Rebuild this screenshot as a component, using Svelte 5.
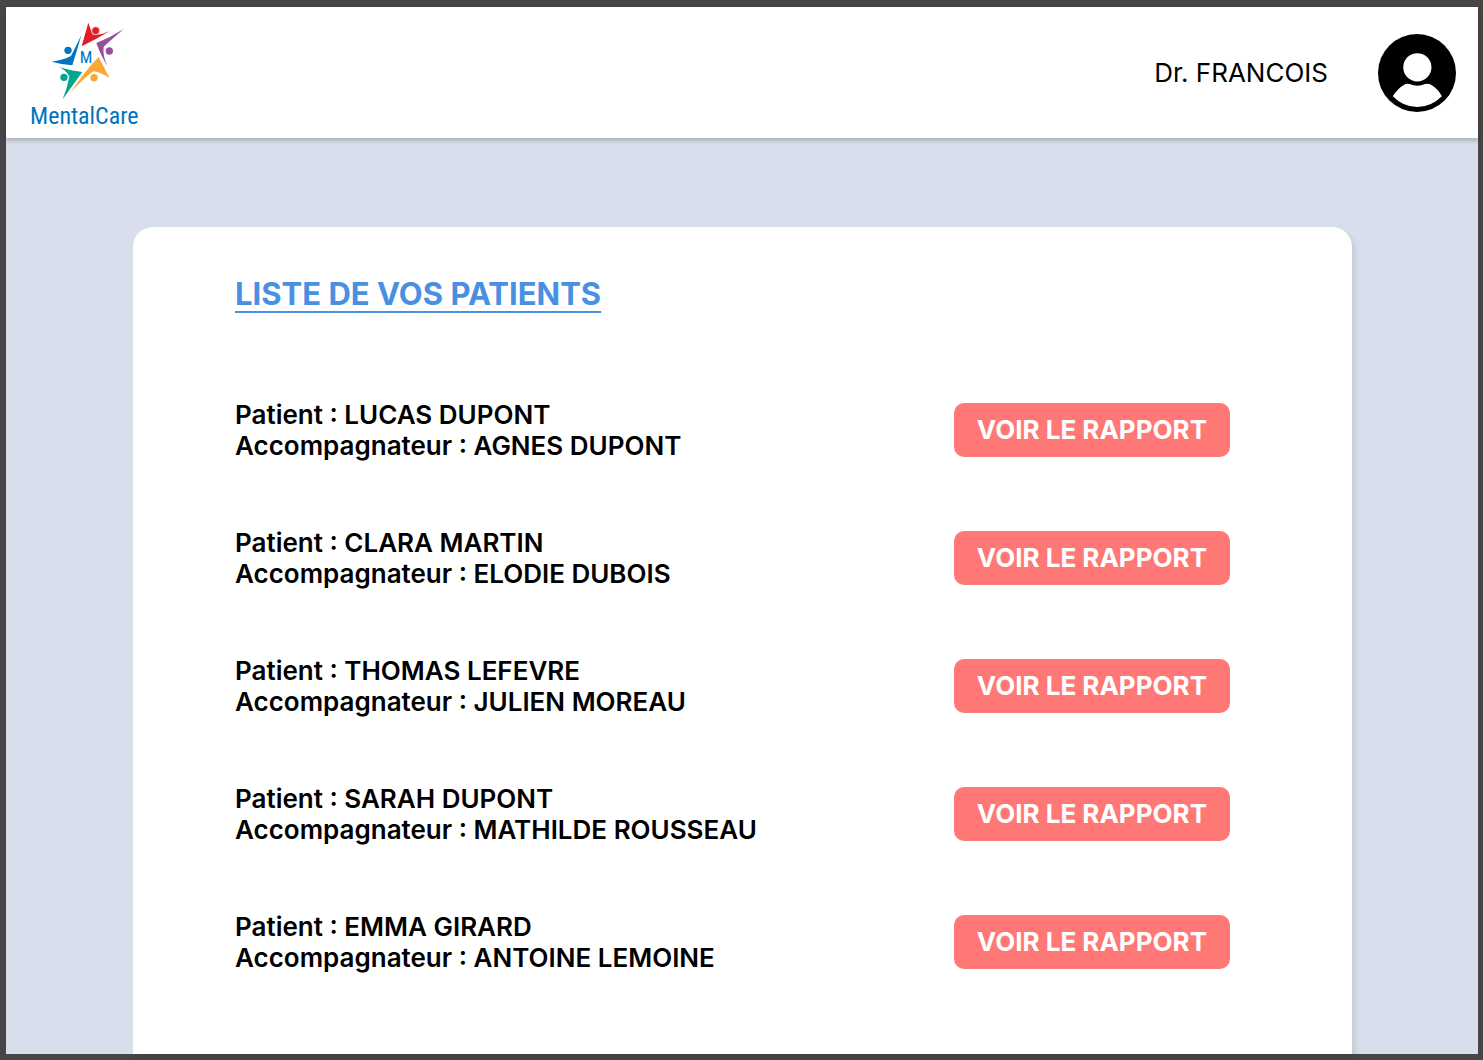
<script>
  const doctor = 'Dr. FRANCOIS';
  const patients = [
    { name: 'LUCAS DUPONT', companion: 'AGNES DUPONT' },
    { name: 'CLARA MARTIN', companion: 'ELODIE DUBOIS' },
    { name: 'THOMAS LEFEVRE', companion: 'JULIEN MOREAU' },
    { name: 'SARAH DUPONT', companion: 'MATHILDE ROUSSEAU' },
    { name: 'EMMA GIRARD', companion: 'ANTOINE LEMOINE' }
  ];
</script>

<div class="frame">
  <header>
    <div class="brand">
      <svg class="star" viewBox="132 66 240 234" aria-hidden="true">
        <path fill="#e31b23" d="M265 68 L277 103 Q300 107 329 93 Q290 117 245 139 Z" />
        <circle class="head" fill="#e31b23" cx="287" cy="92" r="12" />
        <path fill="#994f9e" d="M371 87 Q341 113 311 140 Q307 168 323 199 Q304 171 289 129 Q332 112 371 87 Z" />
        <circle fill="#994f9e" cx="328" cy="153" r="11" />
        <path fill="#faa735" d="M296 171 L329 235 Q305 217 280 214 Q246 239 211 279 Q239 236 278 190 Z" />
        <circle fill="#faa735" cx="282" cy="233" r="11" />
        <path fill="#00a78e" d="M178 201 Q207 211 247 216 L188 298 Q202 263 208 230 Q201 213 178 201 Z" />
        <circle fill="#00a78e" cx="192" cy="232" r="11" />
        <path fill="#0074bf" d="M155 185 Q188 181 213 168 Q228 139 244 106 Q231 151 217 196 Q187 194 155 185 Z" />
        <circle fill="#0074bf" cx="204" cy="151" r="11" />
        <text x="258" y="190" text-anchor="middle">M</text>
      </svg>
      <span class="brand-name">MentalCare</span>
    </div>
    <div class="account">
      <span>{doctor}</span>
      <button class="avatar" aria-label="Profil">
        <svg viewBox="714 101 232 232" aria-hidden="true">
          <circle cx="830" cy="217" r="116" />
          <circle cx="831" cy="200" r="42" fill="#fff" />
          <path fill="#fff" d="M758 286 Q772 263 793 251 Q800 247 808 250 Q831 260 854 250 Q864 247 872 252 Q892 264 904 286 Q872 318 831 318 Q789 318 758 286 Z" />
        </svg>
      </button>
    </div>
  </header>

  <main>
    <section class="card">
      <h1>LISTE DE VOS PATIENTS</h1>
      <ul>
        {#each patients as patient}
          <li>
            <div>
              <p>Patient : {patient.name}</p>
              <p>Accompagnateur : {patient.companion}</p>
            </div>
            <button class="report">VOIR LE RAPPORT</button>
          </li>
        {/each}
      </ul>
    </section>
  </main>
</div>

<style>
  :global(body) {
    margin: 0;
  }
  .frame {
    box-sizing: border-box;
    min-height: 100vh;
    display: flex;
    flex-direction: column;
    border: solid #464646;
    border-width: 7px 5px 6px 6px;
    background: #d8deeb;
    color: #000;
    font-family: Inter, sans-serif;
    font-size: 26px;
    line-height: 31px;
  }
  header {
    display: flex;
    justify-content: space-between;
    align-items: center;
    padding: 0 22px 0 24px;
    background: #fff;
    box-shadow: 0 3px 4px rgba(0, 0, 0, 0.2);
  }
  .brand {
    display: flex;
    flex-direction: column;
    align-items: center;
    padding: 15px 0 6px;
    color: #0074bf;
    font-family: 'Roboto Condensed', Roboto, sans-serif;
  }
  .star {
    width: 80px;
    height: 78px;
  }
  .star .head {
    stroke: #fff;
    stroke-width: 2px;
  }
  .star text {
    fill: #0074bf;
    font-size: 50px;
  }
  .brand-name {
    font-size: 24px;
    line-height: 32px;
  }
  .account {
    display: flex;
    align-items: center;
    gap: 50px;
  }
  .avatar {
    width: 78px;
    height: 78px;
    padding: 0;
    border: 0;
    border-radius: 50%;
    background: none;
    cursor: pointer;
  }
  .avatar svg {
    display: block;
  }
  main {
    flex: 1;
    display: flex;
    padding: 89px 126px 0 127px;
  }
  .card {
    flex: 1;
    padding: 48px 122px 81px 102px;
    border-radius: 20px 20px 0 0;
    background: #fff;
    box-shadow: 4px 4px 4px rgba(0, 0, 0, 0.08);
  }
  h1 {
    margin: 0 0 86px;
    color: #4a90e2;
    font-size: 31px;
    line-height: 38px;
    font-weight: 700;
    text-decoration: underline;
    text-decoration-thickness: 2px;
    text-underline-offset: 6px;
  }
  ul {
    display: flex;
    flex-direction: column;
    gap: 66px;
    margin: 0;
    padding: 0;
    list-style: none;
  }
  li {
    display: flex;
    justify-content: space-between;
    align-items: center;
  }
  p {
    margin: 0;
    font-weight: 600;
  }
  .report {
    padding: 11px 23px 12px;
    border: 0;
    border-radius: 10px;
    background: #ff7875;
    color: #fff;
    font: inherit;
    font-weight: 700;
    cursor: pointer;
  }
</style>
